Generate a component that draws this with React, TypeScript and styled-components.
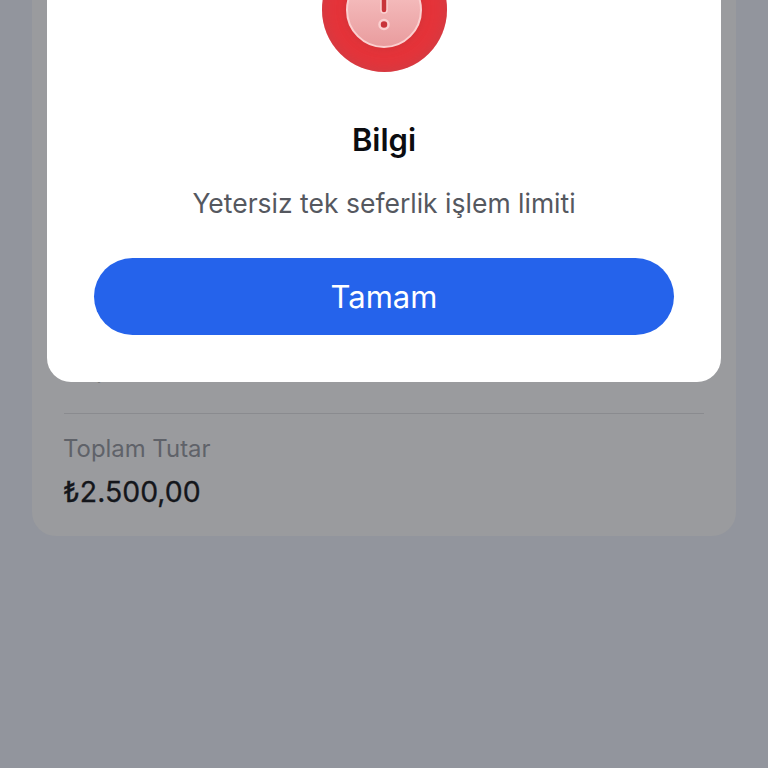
import React from 'react';
import styled, { createGlobalStyle } from 'styled-components';

const GlobalStyle = createGlobalStyle`
  html, body {
    margin: 0;
    padding: 0;
    background: #92959d;
  }
`;

const Page = styled.div`
  position: relative;
  width: 768px;
  height: 768px;
  overflow: hidden;
  background: #92959d;
  font-family: Inter, "Noto Sans", sans-serif;
`;

const Sheet = styled.div`
  box-sizing: border-box;
  height: 536px;
  margin: 0 32px;
  padding: 0 32px 28px;
  display: flex;
  flex-direction: column;
  justify-content: flex-end;
  background: #9a9b9e;
  border-radius: 0 0 24px 24px;
`;

const Divider = styled.div`
  height: 1px;
  background: #8a8b8f;
  margin: 30px 0 21px;
`;

const RowLabel = styled.div`
  font-size: 23.9px;
  line-height: 28px;
  color: #5f6269;
  margin: 0 0 13px -1px;
`;

const RowValue = styled.div`
  font-size: 28.4px;
  line-height: 32px;
  font-weight: 400;
  color: #14161b;
  margin-left: -1px;
  -webkit-text-stroke: 0.3px #14161b;
`;

const Dialog = styled.div`
  position: absolute;
  top: -200px;
  left: 47px;
  width: 674px;
  height: 582px;
  box-sizing: border-box;
  padding: 0 47px 47px;
  display: flex;
  flex-direction: column;
  justify-content: flex-end;
  align-items: center;
  background: #fff;
  border-radius: 24px;
`;

const AlertBadge = styled.div`
  width: 125px;
  height: 125px;
  border-radius: 50%;
  margin-bottom: 49px;
  display: flex;
  align-items: center;
  justify-content: center;
  background: #e5343a;
  box-shadow: inset 0 0 14px rgba(185, 70, 80, 0.6);
`;

const AlertCore = styled.div`
  width: 76px;
  height: 76px;
  border-radius: 50%;
  box-sizing: border-box;
  border: 2px solid #fbd0d0;
  background: linear-gradient(180deg, #f9c9c9 0%, #e99c9e 100%);
  box-shadow: 0 0 6px 2px rgba(200, 50, 55, 0.55);
  display: flex;
  align-items: center;
  justify-content: center;
`;

const Title = styled.h1`
  margin: 0 0 26px;
  font-size: 31px;
  line-height: 38px;
  font-weight: 600;
  color: #0b0c10;
`;

const Message = styled.p`
  margin: 1px 0 38px;
  font-size: 26.5px;
  line-height: 34px;
  color: #55585f;
`;

const PrimaryButton = styled.button`
  width: 100%;
  height: 77px;
  border: none;
  border-radius: 39px;
  background: #2563eb;
  color: #fff;
  font-family: inherit;
  font-size: 31px;
  cursor: pointer;
`;

const App: React.FC = () => (
    <Page>
        <GlobalStyle />
        <Sheet>
            <RowValue>₺5,00</RowValue>
            <Divider />
            <RowLabel>Toplam Tutar</RowLabel>
            <RowValue>₺2.500,00</RowValue>
        </Sheet>
        <Dialog>
            <AlertBadge>
                <AlertCore>
                    <svg width="16" height="44" viewBox="0 0 16 44">
                        <rect x="5" y="-4" width="6" height="29" rx="3" fill="#c8343a" stroke="#fbd0d0" strokeWidth="1.5" />
                        <circle cx="8" cy="36.5" r="4.5" fill="#c8343a" stroke="#fbd0d0" strokeWidth="2.5" />
                    </svg>
                </AlertCore>
            </AlertBadge>
            <Title>Bilgi</Title>
            <Message>Yetersiz tek seferlik işlem limiti</Message>
            <PrimaryButton>Tamam</PrimaryButton>
        </Dialog>
    </Page>
);

export default App;
